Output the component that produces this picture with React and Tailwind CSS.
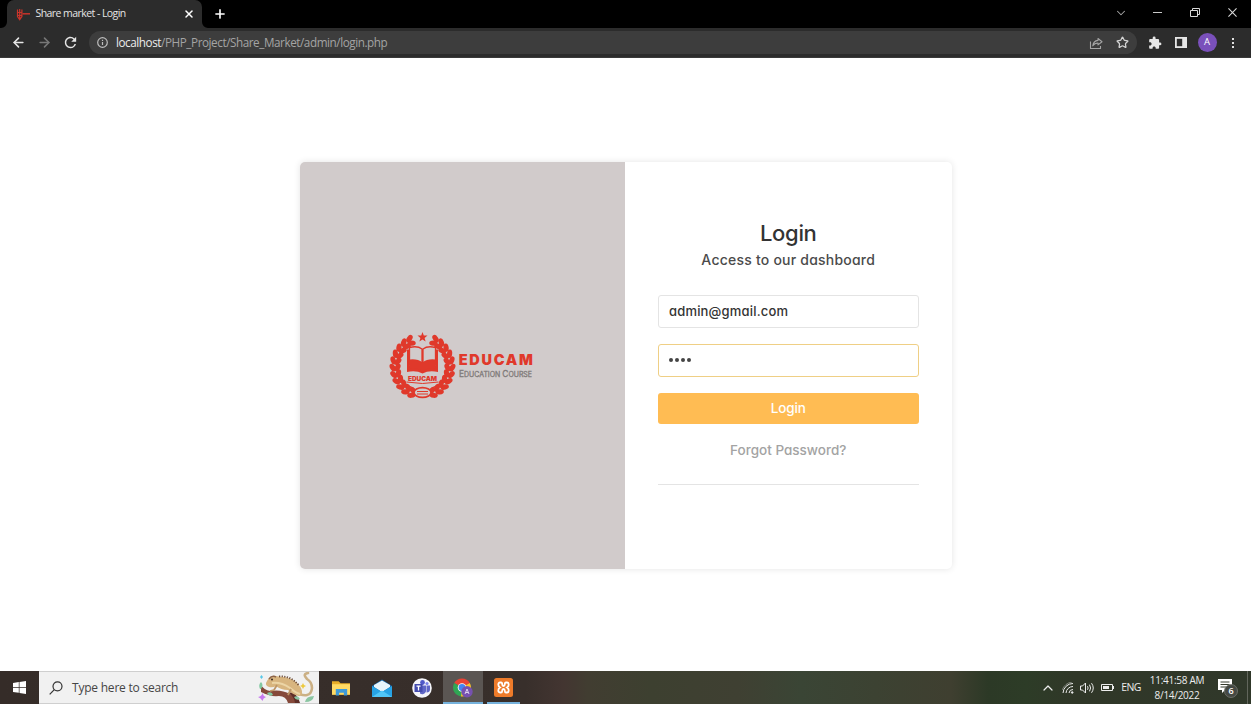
import React from "react";
import { ArrowLeft, ArrowRight, Star, Plus, X, ChevronDown, ChevronUp } from "lucide-react";
import { MdExtension, MdRefresh } from "react-icons/md";

const RED = "#e0392b";

function TabStrip() {
  return (
    <div className="flex h-7 items-stretch bg-black pl-[7px]">
      <div className="relative flex w-[195px] items-center rounded-t-[7px] bg-[#2c2c2c] pl-[9px] pr-[7px] text-[#e4e4e4]">
        <svg className="h-[13px] w-[14px] shrink-0" viewBox="0 0 14 13" fill="none" stroke="#c9342b">
          <path d="M1.5 1.5v7l2.2 3.2 2.2-3.2v-7M3.7 1v10.500M1.500 4.500h4.400M2 7.500h3.500" strokeWidth="1.200" />
          <path d="M6.500 5.800H14" strokeWidth="1.500" />
        </svg>
        <span className="ml-[5.500px] flex-1 whitespace-nowrap text-[10.500px] tracking-[-0.56px]">Share market - Login</span>
        <X className="size-3 text-white" strokeWidth={3} />
        <svg className="absolute bottom-0 -left-[6px] size-[6px]" viewBox="0 0 6 6"><path d="M6 0v6H0A6 6 0 0 0 6 0" fill="#2c2c2c" /></svg>
        <svg className="absolute bottom-0 -right-[6px] size-[6px]" viewBox="0 0 6 6"><path d="M0 0v6h6A6 6 0 0 1 0 0" fill="#2c2c2c" /></svg>
      </div>
      <div className="flex w-[35px] items-center justify-center text-white"><Plus className="size-[14px]" strokeWidth={2.8} /></div>
      <div className="ml-auto flex items-center pb-[2px] text-[#d8d8d8]">
        <div className="flex w-[37px] justify-center"><ChevronDown className="mb-px size-[14px] text-[#a5a5a5]" strokeWidth={1.8} /></div>
        <div className="flex w-[37px] justify-center"><div className="mb-[2px] h-px w-[9px] bg-[#c8c8c8]" /></div>
        <div className="flex w-[37px] justify-center">
          <svg className="mb-[2px] h-[9px] w-[10px]" viewBox="0 0 10 9" fill="none" stroke="currentColor"><path d="M.5 2.500h7v6h-7zM2.500 2.500v-2h7v6h-2" /></svg>
        </div>
        <div className="flex w-[38px] justify-center"><svg className="mb-[2px] size-[9px]" viewBox="0 0 10 10" stroke="currentColor" strokeWidth="1.200"><path d="M.5.5l9 9M9.500.5l-9 9" /></svg></div>
      </div>
    </div>
  );
}

function Toolbar() {
  const cell = "flex w-[26px] shrink-0 items-center justify-center";
  return (
    <div className="flex h-[30px] items-center border-b border-[#3a3a3a] bg-[#2c2c2c] px-[5px] text-[#e6e6e6]">
      <div className={cell}><ArrowLeft className="size-[15px]" strokeWidth={2.5} /></div>
      <div className={cell}><ArrowRight className="size-[15px] text-[#777]" strokeWidth={2.5} /></div>
      <div className={cell}><MdRefresh className="size-[17px]" /></div>
      <div className="ml-1.5 mr-[5px] flex h-[23px] flex-1 items-center rounded-full bg-[#3d3d3d] pl-2 pr-0.5">
        <svg className="size-[11px] shrink-0" viewBox="0 0 11 11" fill="none" stroke="#bdbdbd" strokeWidth="1.200"><circle cx="5.500" cy="5.500" r="4.800" /><path d="M5.500 5v3M5.500 2.700v1.200" /></svg>
        <span className="ml-2 flex-1 whitespace-nowrap text-[11.700px] tracking-[-0.43px] text-[#a4a4a4]">
          <span className="text-[#ececec]">localhost</span>/PHP_Project/Share_Market/admin/login.php
        </span>
        <div className={cell}>
          <svg className="size-[14px]" viewBox="0 0 14 14" fill="none" stroke="#a5a5a5" strokeWidth="1.100" strokeLinejoin="round"><path d="M1.500 5.500v7h10V10M9 2.500l4 3.200-4 3.200V7C6.500 7 5 7.800 3.800 9.800 4.200 6.600 6 4.700 9 4.400z" /></svg>
        </div>
        <div className={cell}><Star className="size-[13px] text-[#d5d5d5]" strokeWidth={2.3} /></div>
      </div>
      <div className={cell}><MdExtension className="size-[14px]" /></div>
      <div className={cell}>
        <svg className="h-[11px] w-3" viewBox="0 0 12 11"><path d="M0 0h12v11H0z" fill="#e6e6e6" /><path d="M1.800 1.800h5.400v7.400H1.800z" fill="#2c2c2c" /></svg>
      </div>
      <div className={cell}><div className="flex size-[19px] items-center justify-center rounded-full bg-[#7a50bb] text-[9.500px] text-white">A</div></div>
      <div className={cell}><div className="flex flex-col gap-[2px]"><i className="size-[2px] bg-[#e0e0e0]" /><i className="size-[2px] bg-[#e0e0e0]" /><i className="size-[2px] bg-[#e0e0e0]" /></div></div>
    </div>
  );
}

function Logo() {
  const leaves = [];
  for (let i = 0; i < 11; i++) {
    const deg = 112 + i * 13.2;
    const a = (deg * Math.PI) / 180;
    for (const [r, turn] of [[31, -30], [26, 28]]) {
      leaves.push([33.500 + r * 0.96 * Math.cos(a), 34.500 + r * Math.sin(a), deg + 90 + turn]);
    }
  }
  const half = leaves.map(([x, y, t], i) => (
    <ellipse key={i} cx={x} cy={y} rx="4.200" ry="2.600" transform={`rotate(${t} ${x} ${y})`} />
  ));
  return (
    <svg className="h-[68px] w-[146px]" viewBox="0 0 146 68">
      <g fill={RED}>
        {half}
        <g transform="matrix(-1 0 0 1 67 0)">{half}</g>
        <path d="M33.500 0l1.300 3.500 3.700.1-2.900 2.300 1 3.500-3.100-2-3.100 2 1-3.500-2.900-2.300 3.700-.1z" />
        <path d="M18 17.500h2.500v18H18zM46.500 17.500H49v18h-2.500zM18 34q8-1 15.500 4 7.500-5 15.500-4v6q-9-2-15.500 1.500Q27 38 18 40z" />
        <path d="M20.500 15.500q8-2 12.500 1.500v18q-4.500-3.500-12.500-2zM46.500 15.500q-8-2-12.500 1.500v18q4.500-3.500 12.500-2z" fill="#d1cbcb" stroke={RED} strokeWidth="1.300" />
        <path d="M20.500 27.500q8-1 13 3 5-4 13-3v9q-8-1-13 3-5-4-13-3z" />
      </g>
      <path d="M17.500 50q16 3 32 0M19 53.500q5 2 7 4M48 53.500q-5 2-7 4" fill="none" stroke={RED} strokeWidth="1" />
      <ellipse cx="33.500" cy="60.500" rx="8.500" ry="4.800" fill="#d1cbcb" stroke={RED} strokeWidth="1.700" />
      <path d="M28 59.500h11M28 62h11" stroke={RED} strokeWidth="1" />
      <text x="19" y="48.500" textLength="29" fontSize="6.500" fontWeight="900" fontFamily="Inter" fill={RED}>EDUCAM</text>
      <text x="69.800" y="33" textLength="74" fontSize="14.500" fontWeight="900" fontFamily="Inter" fill={RED}>EDUCAM</text>
      <text x="70" y="44.500" textLength="73" lengthAdjust="spacingAndGlyphs" fontSize="8.500" fontFamily="Inter" fill="#7f7a79" stroke="#7f7a79" strokeWidth=".3">E<tspan fontSize="7">DUCATION </tspan>C<tspan fontSize="7">OURSE</tspan></text>
    </svg>
  );
}

function LoginCard() {
  return (
    <main className="flex h-[613px] justify-center bg-white pt-[104px] font-['Inter','Open_Sans',sans-serif] [font-feature-settings:'cv11']">
      <div className="flex h-[407px] w-[652px] overflow-hidden rounded-[5px] shadow-[0_0_7px_rgba(0,0,0,0.11)]">
        <div className="flex w-[325.500px] items-center justify-center bg-[#d1cbcb] pr-px"><Logo /></div>
        <form className="flex flex-1 flex-col px-[33px] pt-[55px] text-center font-medium">
          <h1 className="h-8 text-[22px] leading-8 tracking-[-0.3px] text-[#333]">Login</h1>
          <p className="h-[23px] text-[14px] leading-[22px] tracking-[0.22px] text-[#4b4b4b]">Access to our dashboard</p>
          <div className="mt-[23px] flex h-[33px] items-center rounded-[3px] border border-[#e4e4e4] px-2.5 text-[13px] tracking-[0.18px] text-[#333]">admin@gmail.com</div>
          <div className="mt-4 flex h-[33px] items-center gap-[2px] rounded-[3px] border border-[#efcf85] px-[10px] pb-px">
            {[0, 1, 2, 3].map((i) => <i key={i} className="size-[4px] rounded-full bg-[#444]" />)}
          </div>
          <div className="mt-4 h-[31px] rounded-[3px] bg-[#ffbc53] text-[13.500px] leading-[31px] tracking-[-0.1px] text-white">Login</div>
          <p className="mt-4 h-5 text-[13.500px] leading-5 text-[#a3a3a3]">Forgot Password?</p>
          <hr className="mt-6 border-[#e4e4e4]" />
        </form>
      </div>
    </main>
  );
}

function Lizard() {
  return (
    <svg className="h-[31px] w-[60px]" viewBox="0 0 60 31">
      <path d="M4 13q3 5 9 6 11-2 20 3 6 4 8 9H31q-2-7-9-7-9 1-18-4z" fill="#85493a" />
      <path d="M31 21q6 3 7 10h5q-2-7-7-11z" fill="#5e2f28" />
      <path d="M37 20q17 8 18-4 0-6-5-9-5-5 1-6" fill="none" stroke="#cbb084" strokeWidth="2.600" strokeLinecap="round" />
      <path d="M10 9q3-6 9-5 4 1 8 1 12 2 17 11 3 7-2 8-6-1-11-6-7 0-12-4-3 2-7 1-5-2-2-6z" fill="#d8b57f" />
      <path d="M15 11q9-1 18 5 6 5 10 6" fill="none" stroke="#ecd5a6" strokeWidth="2" />
      <path d="M20 13l-3 5-4 1M34 17l-3 6" fill="none" stroke="#bd9566" strokeWidth="1.800" />
      <path d="M22 4.500q12-1 20 9" fill="none" stroke="#6b4a35" strokeWidth="1.800" strokeDasharray="1.200 1.400" />
      <path d="M12 7q3-4 7-2" fill="none" stroke="#8b6248" strokeWidth="1.500" />
      <circle cx="15" cy="7.500" r="1" fill="#38271f" />
      <path d="M1 25q4-1 4.500-4Q6 24 9 25q-3 1-3.500 4Q4 26 1 25z" fill="#c77bf0" />
      <path d="M3 5l1.500-2L6 5 4.500 7z" fill="#57c7e8" />
      <path d="M3 17q-2-4 1-7 3 3 0 7M10 21q5-2 6 2-4 2-6-2" fill="#82c8a1" />
      <path d="M48 30q1-6 9-6-1 6-9 6zM37 25q4-2 6 2-4 2-6-2" fill="#8bc6a2" />
      <path d="M45 13l1-2 1 2 2 1-2 1-1 2-1-2-2-1z" fill="#edc93d" />
    </svg>
  );
}

function Taskbar() {
  const app = "flex w-[40.500px] items-center justify-center";
  return (
    <div className="flex h-[33px] items-stretch bg-[linear-gradient(90deg,#352c28_0%,#382f2b_42%,#433531_45%,#413d31_47%,#3d4030_52%,#3f4032_59%,#3a4535_64%,#3c4232_70%,#3f3f30_76%,#2c3926_79%,#2d3c27_82%,#303728_86%,#30382a_100%)]">
      <div className="flex w-[39px] items-center justify-center">
        <svg className="size-[13px]" viewBox="0 0 13 13" fill="#fff"><path d="M0 2l5.800-.9v5H0zM6.500 1L13 0v6.100H6.500zM0 6.800h5.800v5L0 11zM6.500 6.800H13V13l-6.500-1z" /></svg>
      </div>
      <div className="flex w-[280px] items-center border-y border-[#cfcfcf] bg-[#f1f1f1] pl-[10px] pr-[2px] text-[#454545]">
        <svg className="size-[14px]" viewBox="0 0 14 14" fill="none" stroke="#333" strokeWidth="1.200"><circle cx="8.500" cy="5.300" r="4.500" /><path d="M5.300 8.600L.7 13.300" /></svg>
        <span className="ml-[9px] flex-1 whitespace-nowrap text-[12px] tracking-[-0.22px]">Type here to search</span>
        <Lizard />
      </div>
      <div className="ml-0.5 flex">
        <div className={app}>
          <svg className="h-4 w-[18px]" viewBox="0 0 19 16"><path d="M0 1h7l2 2h10v12H0z" fill="#e9ae28" /><path d="M0 4h19v11H0z" fill="#ffda64" /><path d="M4 9h12v7h-3.500v-3h-5v3H4z" fill="#3f9bd8" /></svg>
        </div>
        <div className={app}>
          <svg className="h-[18px] w-5" viewBox="0 0 20 18"><path d="M0 7l10-6.500L20 7v10H0z" fill="#176bb0" /><path d="M2 6L10 1.500 18 6v2l-8 5-8-5z" fill="#e9f5fb" /><path d="M0 7l10 6 10-6v11H0z" fill="#27a3e5" /><path d="M0 18l10-6.500L20 18z" fill="#50c6f7" /></svg>
        </div>
        <div className={app}>
          <svg className="size-5" viewBox="0 0 20 20"><circle cx="10" cy="10" r="9.800" fill="#f5f5fa" /><circle cx="10.500" cy="4.500" r="2.400" fill="#5059c9" /><circle cx="15" cy="5.500" r="1.600" fill="#7b83eb" /><path d="M8 7.500h6v6a4 4 0 0 1-6 2zM14.500 7.500H18v4q0 3-3.500 3z" fill="#6067c7" /><path d="M2.500 6h8v8h-8z" fill="#444bae" /><path d="M4.500 8.200h4M6.500 8.200v4.300" stroke="#fff" strokeWidth="1.300" /></svg>
        </div>
        <div className="flex w-[40.500px] items-center justify-center border-b-2 border-[#76b2dc] bg-[#5b5653]">
          <svg className="ml-px mt-0.5 size-5" viewBox="0 0 20 20"><path d="M9 9.500L1.200 5A9 9 0 0 1 16.800 5z" fill="#e94335" /><path d="M9 9.500L1.200 5A9 9 0 0 0 8 18.400l4-6z" fill="#30a654" /><path d="M9 9.500L16.800 5A9 9 0 0 1 8 18.400z" fill="#f9c22d" /><circle cx="9" cy="9.500" r="4.300" fill="#fff" /><circle cx="9" cy="9.500" r="3.400" fill="#4385f3" /><circle cx="14" cy="13.800" r="5.700" fill="#7651b0" /><path d="M12 16l2-5 2 5M12.800 14.500h2.400" stroke="#e8dff5" fill="none" strokeWidth=".9" /></svg>
        </div>
        <div className="flex w-10 flex-col items-center">
          <div className="flex h-[31px] items-center">
            <svg className="mt-0.5 size-[19px]" viewBox="0 0 19 19"><rect width="19" height="19" rx="2.500" fill="#ee7b2a" /><path d="M6 4.500h1q1.200 0 1.200 1.800Q8.200 8 9.500 8t1.300-1.700Q10.800 4.500 12 4.500h1q1.700 0 1.700 2T13 9.500q1.700 1 1.700 3t-1.700 2h-1q-1.200 0-1.200-1.800Q10.800 11 9.500 11t-1.300 1.700q0 1.800-1.200 1.800H6q-1.700 0-1.700-2T6 9.500q-1.700-1-1.700-3T6 4.500z" fill="none" stroke="#fff" strokeWidth="1.800" /></svg>
          </div>
          <div className="h-0.5 w-[33px] bg-[#76b2dc]" />
        </div>
      </div>
      <div className="ml-auto flex items-center text-[#ededed]">
        <div className="flex w-5 justify-center"><ChevronUp className="size-[16px]" strokeWidth={1.800} /></div>
        <div className="flex w-5 justify-center">
          <svg className="size-3" viewBox="0 0 12 12" fill="none" stroke="currentColor"><path d="M1 11A10 10 0 0 1 11 1.500M4 11a7 7 0 0 1 7-6.500M7 11a4 4 0 0 1 4-3.500" /><circle cx="10.200" cy="10.500" r=".8" fill="currentColor" /><path d="M0 8q3-7 10-8" strokeOpacity=".4" /></svg>
        </div>
        <div className="flex w-[19px] justify-center">
          <svg className="h-3 w-[15px]" viewBox="0 0 15 12" fill="none" stroke="currentColor"><path d="M.5 4h2l3-3v10l-3-3h-2zM7.500 4.200q1.200 1.800 0 3.600M9.500 2.700q2.200 3.300 0 6.600M11.500 1.200q3.500 4.800 0 9.600" /></svg>
        </div>
        <div className="flex w-5 justify-center">
          <svg className="h-[7px] w-[13px]" viewBox="0 0 13 7"><path d="M.5.5h11v6H.5z" fill="none" stroke="currentColor" /><path d="M2 2h6v3H2zM12 2h1v3h-1z" fill="currentColor" /></svg>
        </div>
        <span className="w-[28px] text-center text-[10.500px] tracking-[-0.55px]">ENG</span>
        <div className="w-[64px] whitespace-nowrap text-center text-[10px] leading-[15px] tracking-[-0.28px]">11:41:58 AM<br />8/14/2022</div>
        <div className="ml-[3px] flex w-[32px] justify-center">
          <svg className="mt-px h-[22px] w-[22px]" viewBox="0 0 22 22"><path d="M1 2h14v11H8l-3 3v-3H1z" fill="#fff" /><path d="M3.500 5h9M3.500 7.500h9M3.500 10h6" stroke="#353b2e" /><circle cx="14" cy="14" r="6.500" fill="#454943" stroke="#777a74" strokeWidth=".8" /><text x="14" y="17.300" textAnchor="middle" fontSize="9" fontWeight="600" fontFamily="Open Sans" fill="#fff">6</text></svg>
        </div>
        <div className="ml-[3px] mr-[3px] h-[33px] w-px bg-[#62665c]" />
      </div>
    </div>
  );
}

export default function App() {
  return (
    <div className="flex h-[704px] w-[1251px] flex-col overflow-hidden bg-white font-['Open_Sans','Noto_Sans',sans-serif]">
      <TabStrip />
      <Toolbar />
      <LoginCard />
      <Taskbar />
    </div>
  );
}
